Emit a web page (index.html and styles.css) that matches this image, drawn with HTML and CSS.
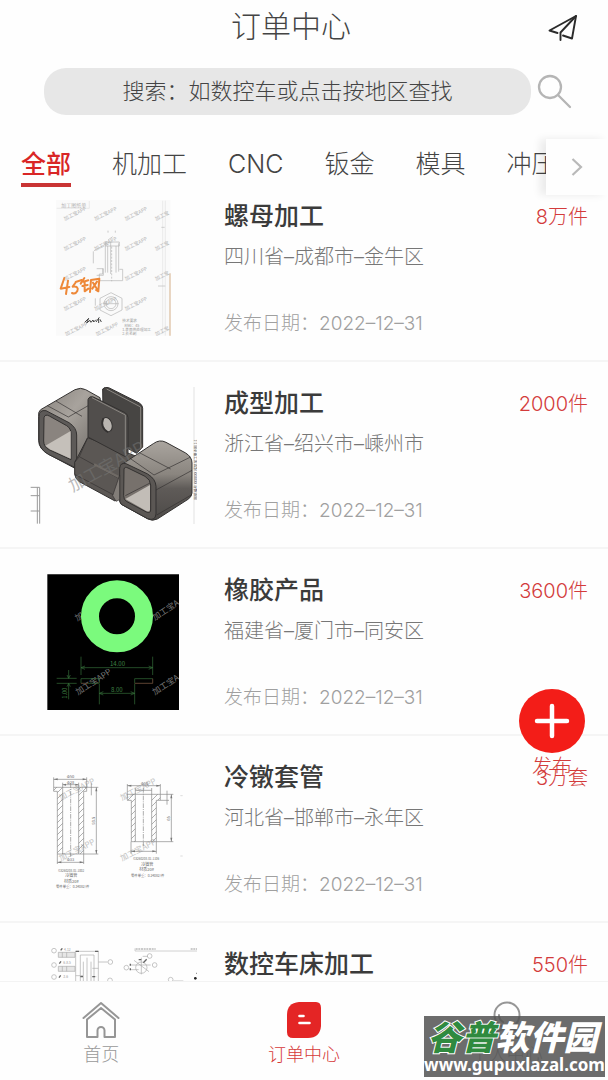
FILE: index.html
```html
<!DOCTYPE html>
<html lang="zh-CN">
<head>
<meta charset="utf-8">
<meta name="viewport" content="width=device-width, initial-scale=1">
<title>订单中心</title>
<link rel="stylesheet" href="styles.css">
</head>
<body>
<div class="app">
  <header class="header">
    <div class="title-row">
      <h1 class="page-title">订单中心</h1>
      <button class="icon-btn send" type="button" aria-label="发送">
        <svg width="30" height="30" viewBox="0 0 30 30" fill="none" stroke="#2b2b2b" stroke-width="1.9" stroke-linejoin="round" stroke-linecap="round"><path d="M9.500 21 1.500 18.500 28 4 24 26.500 15 23.500"/><path d="M28 4 12.500 20.500V28"/></svg>
      </button>
    </div>
    <div class="search-row">
      <input class="search" type="text" aria-label="搜索" placeholder="搜索：如数控车或点击按地区查找">
      <button class="icon-btn find" type="button" aria-label="查找">
        <svg width="36" height="36" viewBox="0 0 36 36" fill="none" stroke="#b5b5b5" stroke-width="2.300" stroke-linecap="round"><circle cx="13" cy="13" r="11"/><path d="M21 21 33 33"/></svg>
      </button>
    </div>
    <div class="tabs-wrap">
      <nav class="tabs">
        <button class="tab active" type="button">全部</button>
        <button class="tab" type="button">机加工</button>
        <button class="tab" type="button">CNC</button>
        <button class="tab" type="button">钣金</button>
        <button class="tab" type="button">模具</button>
        <button class="tab" type="button">冲压</button>
      </nav>
      <button class="more" type="button" aria-label="更多分类">
        <svg width="12" height="20" viewBox="0 0 12 20" fill="none" stroke="#b9b9b9" stroke-width="2.200"><path d="M1.500 2 10 10 1.500 18"/></svg>
      </button>
    </div>
  </header>

  <main class="list">
    <article class="item">
      <svg class="thumb" viewBox="27 30 504 411" fill="none">
        <path fill="#fafafa" d="M108 30h344v407H108z"/>
        <path stroke="#e2e2e2" stroke-width="2" d="M110 55H208V33M428 32V432M436 32V437"/>
        <path stroke="#dfc3a6" stroke-width="4" d="M450 250V437"/>
        <path stroke="#bbb" stroke-width="2" d="M414 288h22M424 112h10"/>
        <g class="mark" fill="#b4b4b4" font-size="15">
          <text transform="translate(134 92) rotate(-26)">加工宝APP</text><text transform="translate(226 92) rotate(-26)">加工宝APP</text><text transform="translate(317 92) rotate(-26)">加工宝APP</text><text transform="translate(408 92) rotate(-26)">加工宝</text>
          <text transform="translate(134 182) rotate(-26)">加工宝APP</text><text transform="translate(226 182) rotate(-26)">加工宝APP</text><text transform="translate(317 182) rotate(-26)">加工宝APP</text><text transform="translate(408 182) rotate(-26)">加工宝</text>
          <text transform="translate(134 272) rotate(-26)">加工宝APP</text><text transform="translate(317 272) rotate(-26)">加工宝APP</text><text transform="translate(408 272) rotate(-26)">加工宝</text>
          <text transform="translate(134 362) rotate(-26)">加工宝APP</text><text transform="translate(226 362) rotate(-26)">加工宝APP</text><text transform="translate(317 362) rotate(-26)">加工宝APP</text>
          <text transform="translate(138 438) rotate(-26)">加工宝APP</text><text transform="translate(230 438) rotate(-26)">加工宝APP</text><text transform="translate(408 438) rotate(-26)">加工宝</text>
          <text x="124" y="50" font-size="15">加工图纸单</text>
        </g>
        <g stroke="#b3b3b3" stroke-width="2">
          <path d="M256 168v80M263 168v80M288 168v80M296 160v85M272 156v96M256 156h42v12h-42zM248 236v16h-10v20h70v-34h-10M230 236h20v20h-20M222 182l46-26M220 184v36M264 150l14-10"/>
          <path d="M264 122v8M286 122v8M275 170v104" stroke-dasharray="6 4"/>
          <path d="M273 308l33 17v35l-33 17-33-17v-35z"/><circle cx="273" cy="341" r="21"/><circle cx="273" cy="341" r="15"/><path d="M250 341h46M226 325v22"/>
        </g>
        <g stroke="#ee8838" stroke-width="6" stroke-linecap="round" stroke-linejoin="round">
          <path d="M133 264 122 296 148 291M144 272 138 312"/>
          <path d="M168 276 158 290Q178 288 172 303 166 314 156 309M167 276l18-6"/>
          <path d="M193 264 182 281M190 275l15-4M187 288l16-3M194 276v28l11-8M213 270l-3 36M213 270l25-4-3 38-7-4M219 278l12 19M231 275l-14 21"/>
        </g>
        <path stroke="#444" stroke-width="3" d="M194 397l12-12-6 14 10-8 3 6 6-7 2 6 7-7M228 396l10-14M236 386v13M240 388l4 8"/>
        <g class="mark" fill="#999" font-size="11"><text x="307" y="396">技术要求</text><text x="313" y="411">材料：45</text><text x="307" y="424">1.表面热处理加工</text><text x="307" y="436">2.去毛刺</text></g>
      </svg>
      <div class="info"><h2 class="name">螺母加工</h2><p class="place">四川省–成都市–金牛区</p><p class="date">发布日期：2022–12–31</p></div>
      <span class="count">8万件</span>
    </article>

    <article class="item">
      <svg class="thumb" viewBox="27 36 504 411" fill="none">
        <defs>
          <linearGradient id="tube" x1="0" y1="0" x2="1" y2="1"><stop offset="0" stop-color="#85807b"/><stop offset=".4" stop-color="#a8a39d"/><stop offset="1" stop-color="#625e5a"/></linearGradient>
          <linearGradient id="side" x1="0" y1="0" x2="0" y2="1"><stop offset="0" stop-color="#aaa59f"/><stop offset=".42" stop-color="#8a857f"/><stop offset=".6" stop-color="#5f5b58"/><stop offset="1" stop-color="#4d4a48"/></linearGradient>
        </defs>
        <path stroke="#d5d5d5" stroke-width="2" d="M522 36V447"/>
        <g stroke="#333130" stroke-width="3" stroke-linejoin="round">
          <path fill="url(#tube)" d="M62 104 165 44Q182 36 197 44L240 68 252 180 165 280 86 238Q56 222 56 196V124Q54 110 62 104Z"/>
          <path d="M82 92 145 126M108 78 186 124M145 126 222 82" stroke-width="2"/>
          <path fill="#5d5a58" d="M57 124Q57 104 78 107L147 143Q170 158 170 180V280L85 238Q57 222 57 196Z"/>
          <path fill="#8a847f" d="M72 128Q75 116 88 123L140 152Q153 160 153 176V254L89 225Q71 216 71 198Z"/>
          <path fill="#c5c0ba" stroke="none" d="M76 212 152 168V251L90 223Z"/>
          <path fill="#474543" d="M248 42Q254 34 266 38L358 84Q368 90 368 100V216L350 235 250 180Z"/>
          <path d="M260 42 362 96V220" stroke="#8b8782"/>
          <path fill="#5b5754" d="M203 188 176 240 164 262V298Q166 312 178 320L285 378 299 366 345 330 352 245Z"/>
          <path d="M164 262 178 245 296 310M203 188 178 245M164 298 285 362" stroke-width="2"/>
          <path d="M222 268 296 306" stroke="#6f6a65" stroke-width="7"/>
          <path fill="#514e4c" d="M204 74Q208 62 220 66L313 112Q324 117 324 128V240L314 244 204 186Z"/>
          <path d="M216 68 316 120V242" stroke="#8b8782"/>
          <ellipse cx="261" cy="149" rx="15" ry="22" fill="#b9b5b0" transform="rotate(-18 261 149)"/><path d="M250 130q-10 28 14 42" stroke-width="5"/>
          <path fill="url(#side)" d="M306 268 400 206Q419 192 438 202L497 234Q516 246 516 264V354Q515 366 504 373L412 432Q397 440 382 431L304 388Q298 382 299 370Z"/>
          <path d="M330 250 402 300M358 233 452 282M402 300 512 246M408 345 516 286M410 420 514 360" stroke-width="2"/>
          <path fill="#5b5754" d="M299 280Q300 262 318 266L383 297Q407 312 408 334V417Q406 439 383 431L304 388Q298 382 299 370Z"/>
          <path fill="#77716c" d="M312 282Q314 274 324 279L375 304Q392 314 392 330V405Q392 416 379 411L319 379Q311 374 311 362Z"/>
          <path fill="#c2bdb7" stroke="none" d="M316 372 390 330V405Q387 412 379 408Z"/>
          <path d="M316 362 390 324" stroke-width="2"/>
          <path fill="#827d78" d="M278 362 299 300V374L288 379Z" stroke-width="2"/>
        </g>
        <text class="mark" fill="#777" fill-opacity=".5" font-size="52" transform="translate(158 352) rotate(-29)">加工宝APP</text>
        <path stroke="#999" stroke-width="3" d="M32 337H59V446M52 337V446M32 362H59M32 408H59"/>
        <text class="mark" fill="#444" font-size="11" transform="translate(530 374) rotate(-90)">图纸编号 XXXXXX 成型加工零件图 1:1</text>
      </svg>
      <div class="info"><h2 class="name">成型加工</h2><p class="place">浙江省–绍兴市–嵊州市</p><p class="date">发布日期：2022–12–31</p></div>
      <span class="count">2000件</span>
    </article>

    <article class="item">
      <svg class="thumb" viewBox="-3 42 504 411" fill="none">
        <clipPath id="cad"><path d="M52 43H447V450H52z"/></clipPath>
        <path fill="#000" d="M52 43H447V450H52z"/>
        <g clip-path="url(#cad)"><g class="mark" fill="#777" font-size="25">
          <text transform="translate(142 184) rotate(-33)">加工宝APP</text><text transform="translate(374 182) rotate(-33)">加工宝A</text>
          <text transform="translate(144 406) rotate(-33)">加工宝APP</text><text transform="translate(374 406) rotate(-33)">加工宝A</text>
        </g></g>
        <circle cx="261" cy="169" r="81" stroke="#7bfa7d" stroke-width="54"/>
        <g stroke="#35703a" stroke-width="2">
          <path d="M153 290V345M368 290V345M153 323H368M165 318 153 323l12 5M356 318l12 5-12 5M208 372V433M314 372V433M208 400H314M220 395l-12 5 12 5M302 395l12 5-12 5M80 355H140M80 370H140M116 330V355M116 370V418M111 345l5 10 5-10M111 380l5-10 5 10M153 356h55v14h-55zM314 356h54v14h-54z"/>
        </g>
        <path stroke="#6f2f2f" stroke-width="2" d="M314 370h54V356M153 370h20"/>
        <g class="mark" fill="#3f8044" font-size="18"><text x="240" y="319">14.00</text><text x="243" y="396">8.00</text><text transform="translate(112 416) rotate(-90)" font-size="17">1.00</text></g>
      </svg>
      <div class="info"><h2 class="name">橡胶产品</h2><p class="place">福建省–厦门市–同安区</p><p class="date">发布日期：2022–12–31</p></div>
      <span class="count">3600件</span>
    </article>

    <article class="item">
      <svg class="thumb" viewBox="-3 3 504 411" fill="none">
        <defs><pattern id="hatch" width="18" height="18" patternUnits="userSpaceOnUse"><path d="M-2 20 20 -2" stroke="#888" stroke-width="2"/></pattern></defs>
        <g class="mark" fill="#c4c4c4" font-size="24">
          <text transform="translate(92 122) rotate(-27)">加工宝APP</text><text transform="translate(276 122) rotate(-27)">加工宝APP</text>
          <text transform="translate(92 304) rotate(-27)">加工宝APP</text><text transform="translate(276 304) rotate(-27)">加工宝APP</text>
        </g>
        <g stroke="#858585" stroke-width="2">
          <path fill="url(#hatch)" d="M71 82h27v200H82V94H71zM170 82h-24v200h15V94h9z"/>
          <path d="M98 82h48M98 282h48M71 52v30M170 52v30M71 58h99M98 68v14M146 68v14M98 74h48M82 282v30M161 282v30M82 307h79M165 82h40M161 282h44M199 82v200M184 70v36"/>
          <path d="M122 70v220" stroke-dasharray="14 3 3 3"/>
          <path fill="url(#hatch)" d="M292 103h24v142h-12V121h-12zM391 103h-26v142h14V121h12z"/>
          <path d="M316 103h49M316 245h49M292 72v31M391 72v31M292 77h99M316 84v19M365 84v19M316 91h49M303 245v36M379 245v36M303 274h76M391 103h39M379 245h51M424 103v142M391 121h26M411 92v42"/>
          <path d="M340 84v174" stroke-dasharray="14 3 3 3"/>
        </g>
        <path fill="#777" d="M71 58l12-3v6zM170 58l-12-3v6zM98 74l10-3v6zM146 74l-10-3v6zM82 307l12-3v6zM161 307l-12-3v6zM199 82l-3 12h6zM199 282l-3-12h6zM292 77l12-3v6zM391 77l-12-3v6zM303 274l12-3v6zM379 274l-12-3v6zM424 103l-3 12h6zM424 245l-3-12h6z"/>
        <g class="mark" fill="#666" font-size="12">
          <text x="110" y="54">Φ50</text><text x="110" y="71">Φ28</text><text x="110" y="304">Φ33</text><text x="332" y="74">Φ50</text><text transform="translate(196 194) rotate(-90)">93.5</text><text transform="translate(421 182) rotate(-90)">65</text>
          <text x="85" y="335" font-size="9">GX260208-01-1002</text><text x="106" y="352">冷镦管</text><text x="102" y="368">材质20#</text><text x="78" y="384" font-size="10">零件单重：0.34082/件</text>
          <text x="310" y="301" font-size="9">GX260208-01-1106</text><text x="334" y="318">冷镦管</text><text x="328" y="334">材质20#</text><text x="303" y="350" font-size="10">零件单重：0.24082/件</text>
        </g>
        <path stroke="#ccc" stroke-width="2" d="M451 107h7M451 288h7"/>
      </svg>
      <div class="info"><h2 class="name">冷镦套管</h2><p class="place">河北省–邯郸市–永年区</p><p class="date">发布日期：2022–12–31</p></div>
      <span class="count">3万套</span>
    </article>

    <article class="item">
      <svg class="thumb" viewBox="-3 51 504 411" fill="none">
        <g stroke="#aaa" stroke-width="2">
          <circle cx="72" cy="59" r="7"/><circle cx="72" cy="102" r="7"/><circle cx="72" cy="138" r="7"/><circle cx="241" cy="93" r="7"/><circle cx="240" cy="148" r="7"/>
          <path fill="#e6e6e6" d="M85 64h50v15H85zM85 106h50v15H85z"/>
          <path d="M97 64v15M110 64v15M97 106v15M110 106v15M137 61h68M137 61v260M205 61v260M151 72h41M151 72v240M192 72v240M160 92v220M183 92v220M171 80v240M137 134h22M187 112h18M205 93h28M187 137h12"/>
          <path d="M315 60H526M315 52v8" stroke="#bbb"/>
          <circle cx="334" cy="110" r="17"/><circle cx="289" cy="110" r="7"/><circle cx="374" cy="102" r="7"/><circle cx="359" cy="75" r="7"/><circle cx="422" cy="146" r="7"/><circle cx="517" cy="142" r="8"/>
          <path d="M312 88l45 34M302 102h60M302 116h24M334 80v50M338 76h16M430 150h30M500 142h10"/>
        </g>
        <path stroke="#666" stroke-width="4" d="M92 58l5-6M88 98l5-7M87 140l5-7M137 61h10M195 61h10M151 137h8M187 137h8M340 95l10-10M301 98v6M301 112v6M326 86h8M499 127h10"/>
        <circle cx="496" cy="142" r="4" fill="#222"/>
        <g class="mark" fill="#999" font-size="10"><text x="102" y="61">4-12</text><text x="100" y="100">6-8.5</text><text x="100" y="140">3-6</text></g>
        <path stroke="#bbb" stroke-width="4" stroke-dasharray="6 2" d="M317 54h60M482 54h38"/>
      </svg>
      <div class="info"><h2 class="name">数控车床加工</h2></div>
      <span class="count">550件</span>
    </article>
  </main>

  <nav class="bottom-nav">
    <a class="nav-item" href="#home">
      <svg width="38" height="38" viewBox="0 0 38 38" fill="none" stroke="#969696" stroke-width="2" stroke-linecap="round" stroke-linejoin="round"><path d="M1.500 17 19 2 36.500 17"/><path d="M5 18.500V36h10.500v-6.500a3.500 3.500 0 0 1 7 0V36H33V18.500L19 7Z"/></svg>
      <span>首页</span>
    </a>
    <a class="nav-item current" href="#orders">
      <svg width="38" height="38" viewBox="0 0 38 38"><path fill="#e42525" d="M14 1H31Q36 1 36 7V25Q35 37 23 37H8Q2 37 2 31V14Q2 2 14 1Z"/><path stroke="#fff" stroke-width="2.600" stroke-linecap="round" d="M14.500 15h4M14.500 22h10"/></svg>
      <span>订单中心</span>
    </a>
    <a class="nav-item" href="#me">
      <svg width="38" height="38" viewBox="0 0 38 38" fill="none" stroke="#969696" stroke-width="2" stroke-linecap="round"><circle cx="19" cy="14" r="12.500"/><path d="M11 14a8 8 0 0 0 4 7M4 37q3-9 15-9t15 9Z"/></svg>
      <span>个人中心</span>
    </a>
  </nav>

  <button class="publish" type="button">
    <span class="publish-disc"><svg width="36" height="36" viewBox="0 0 36 36" stroke="#fff" stroke-width="4.500" stroke-linecap="round"><path d="M18 3V33M3 18H33"/></svg></span>
    <span class="publish-label">发布</span>
  </button>

  <div class="site-badge">
    <p class="badge-name"><span class="badge-green">谷普</span>软件园</p>
    <p class="badge-url">www.gupuxlazal.com</p>
  </div>
</div>
</body>
</html>
```
FILE: styles.css
```css
* { box-sizing: border-box; }

body {
  margin: 0;
  background: #fefefe;
  color: #444;
  font-family: Inter, "Noto Sans CJK SC", sans-serif;
  font-weight: 300;
}

h1, h2, p { margin: 0; }
button, input { font: inherit; color: inherit; border: 0; background: none; padding: 0; }
a { color: inherit; text-decoration: none; }
svg { display: block; }

.app {
  position: relative;
  display: flex;
  flex-direction: column;
  height: 100vh;
  overflow: hidden;
}

.header { flex: none; }

.title-row {
  display: flex;
  align-items: center;
  height: 54px;
  padding: 0 30px 0 34px;
}
.page-title {
  flex: 1;
  padding-bottom: 2px;
  text-align: center;
  font-size: 30px;
  line-height: 40px;
  font-weight: 300;
}

.search-row {
  display: flex;
  align-items: center;
  gap: 6px;
  padding: 14px 35px 0 44px;
}
.search {
  flex: 1;
  min-width: 0;
  height: 47px;
  padding-bottom: 2px;
  border-radius: 22px;
  background: #e7e7e7;
  text-align: center;
  font-size: 22px;
}
.search::placeholder { color: #444; opacity: 1; }

.tabs-wrap { position: relative; margin-top: 24px; height: 48px; }
.tabs {
  display: flex;
  gap: 41px;
  height: 48px;
  padding-left: 21px;
  overflow: hidden;
}
.tab {
  flex: none;
  height: 48px;
  padding-top: 6px;
  border-bottom: 4px solid transparent;
  font-size: 25px;
  line-height: 38px;
}
.tab.active { color: #d92626; border-color: #c93434; font-weight: 500; }
.more {
  position: absolute;
  top: 0;
  right: 0;
  z-index: 1;
  display: flex;
  align-items: center;
  justify-content: center;
  width: 62px;
  height: 56px;
  background: #fefefe;
  box-shadow: -6px 0 8px rgba(0, 0, 0, .08);
}

.list { flex: 1; min-height: 0; overflow: hidden; }
.item {
  display: flex;
  align-items: flex-start;
  height: 187px;
  padding: 25px 20px 0 29px;
  border-bottom: 2px solid #f5f5f5;
}
.item:first-child { height: 175px; padding-top: 13px; }
.thumb { flex: none; width: 168px; height: 137px; }
.mark { font-family: "Noto Sans CJK SC", sans-serif; font-weight: 400; }
.info { flex: 1; min-width: 0; padding-left: 27px; }
.name { font-size: 25px; line-height: 32px; font-weight: 500; color: #3b3b3b; }
.place { margin-top: 10px; font-size: 20px; line-height: 30px; color: #777; }
.date { margin-top: 38px; font-size: 19px; line-height: 28px; color: #a0a0a0; }
.count { flex: none; font-size: 20px; line-height: 34px; color: #d33b3b; }

.bottom-nav {
  flex: none;
  display: flex;
  height: 99px;
  border-top: 1px solid #f3f3f3;
}
.nav-item {
  flex: 1;
  display: flex;
  flex-direction: column;
  align-items: center;
  gap: 2px;
  padding-top: 19px;
  font-size: 18px;
  line-height: 28px;
  color: #999;
}
.nav-item.current { color: #d63a3a; }

.publish {
  position: absolute;
  right: 22px;
  bottom: 299px;
  display: flex;
  flex-direction: column;
  align-items: center;
  width: 68px;
}
.publish-disc {
  display: flex;
  align-items: center;
  justify-content: center;
  width: 66px;
  height: 64px;
  border-radius: 50%;
  background: #f31d18;
}
.publish-label { font-size: 20px; line-height: 28px; color: #d33b3b; }

.site-badge {
  position: absolute;
  right: 3px;
  bottom: 3px;
  display: flex;
  flex-direction: column;
  align-items: center;
  width: 181px;
  height: 61px;
  background: rgba(84, 84, 84, .86);
  color: #fff;
  white-space: nowrap;
}
.badge-name {
  padding-right: 4px;
  font: italic 900 34px/40px "Noto Sans CJK SC", sans-serif;
}
.badge-green {
  color: #2f8a3f;
  -webkit-text-stroke: 2px #fff;
  paint-order: stroke fill;
}
.badge-url { font: 700 17px/18px "Noto Sans", sans-serif; }
```
